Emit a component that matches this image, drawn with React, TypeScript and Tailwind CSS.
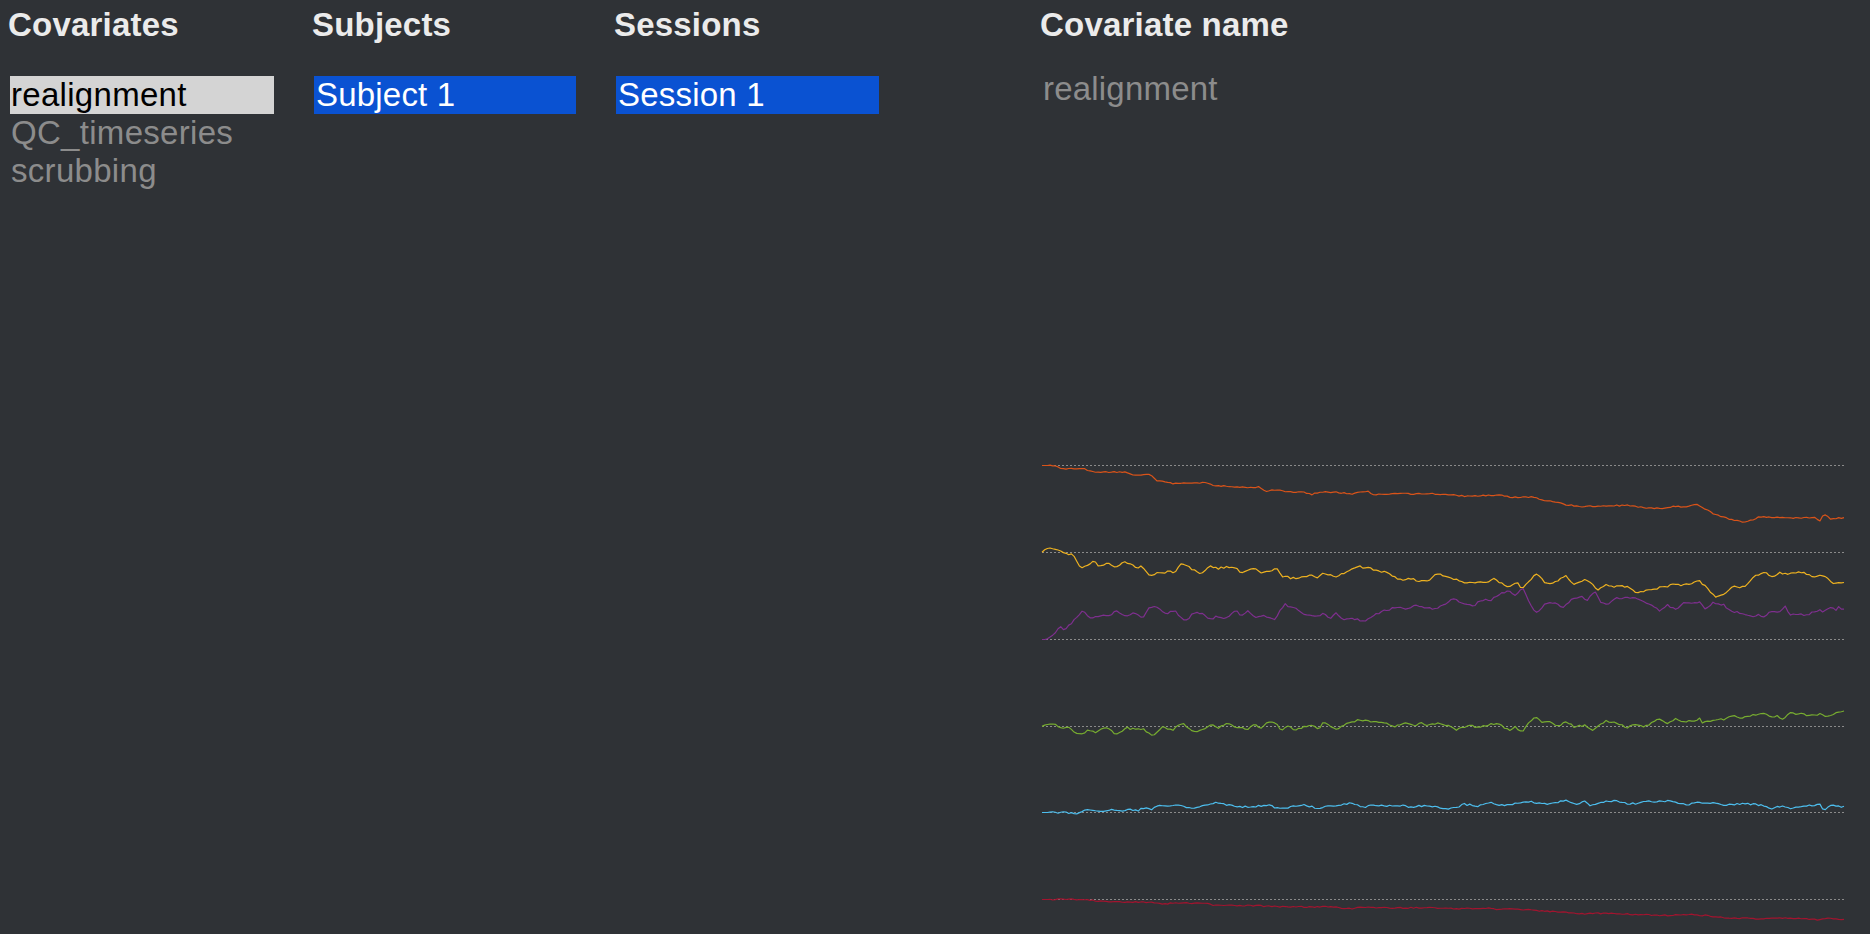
import React from "react";

type Pt = [number, number];

const SX = 840 / 1568;

const traces: { color: string; base: number; zbase: number; noise: number; pts: Pt[] }[] = [
  {
    color: "#d95319",
    base: 25.5,
    zbase: 75,
    noise: 0.6,
    pts: [[22,75],[45,75],[60,85],[100,85],[120,95],[180,95],[190,103],[225,103],[235,120],[270,130],[290,127],[330,127],[345,138],[360,135],[380,140],[430,140],[440,152],[460,148],[480,155],[510,155],[525,162],[540,155],[570,155],[600,160],[630,152],[640,162],[680,160],[720,160],[760,160],[800,165],[820,168],[850,165],[880,165],[900,170],[940,170],[960,180],[980,185],[1000,192],[1030,198],[1080,195],[1120,195],[1140,200],[1160,203],[1190,203],[1200,198],[1230,198],[1245,190],[1270,215],[1290,228],[1310,238],[1330,245],[1350,238],[1360,230],[1400,230],[1420,232],[1465,232],[1475,240],[1482,220],[1495,235],[1518,232]],
  },
  {
    color: "#edb120",
    base: 112.5,
    zbase: 337,
    noise: 1.0,
    pts: [[22,337],[30,325],[45,325],[60,335],[70,345],[78,338],[90,370],[95,385],[110,370],[120,365],[130,380],[145,367],[160,382],[175,365],[190,372],[200,385],[210,378],[225,410],[240,395],[250,400],[260,393],[270,403],[280,370],[295,378],[310,395],[320,400],[335,378],[350,385],[370,380],[385,385],[395,400],[405,393],[420,385],[430,398],[450,393],[460,380],[470,407],[490,415],[510,410],[525,405],[535,415],[545,400],[570,410],[590,395],[615,380],[635,385],[650,395],[660,393],[680,410],[695,420],[710,415],[725,422],[745,420],[760,400],[775,410],[800,420],[810,430],[830,425],[850,428],[865,415],[880,430],[895,440],[910,425],[918,445],[935,420],[945,400],[960,425],[975,432],[1000,405],[1015,432],[1035,420],[1045,425],[1060,452],[1075,430],[1085,440],[1100,435],[1115,440],[1135,460],[1150,448],[1165,448],[1180,438],[1190,440],[1200,430],[1215,438],[1235,428],[1250,422],[1265,445],[1280,470],[1295,465],[1310,440],[1335,440],[1350,410],[1370,395],[1385,410],[1400,398],[1420,402],[1440,395],[1465,412],[1480,405],[1500,428],[1518,425]],
  },
  {
    color: "#7e2f8e",
    base: 199.5,
    zbase: 598,
    noise: 1.0,
    pts: [[22,598],[30,598],[40,590],[55,560],[65,570],[80,545],[98,510],[110,535],[130,525],[145,530],[160,512],[175,528],[195,518],[210,535],[225,498],[240,505],[255,520],[270,512],[290,545],[305,518],[320,520],[335,538],[350,528],[360,538],[385,512],[395,530],[405,510],[420,530],[440,528],[455,540],[475,492],[495,505],[510,520],[535,530],[550,520],[560,540],[570,517],[585,538],[605,535],[625,545],[645,522],[665,510],[690,500],[700,510],[720,495],[740,505],[760,505],[775,490],[790,475],[805,490],[830,495],[840,480],[860,480],[880,460],[895,450],[905,465],[920,445],[935,495],[945,520],[960,495],[980,485],[995,505],[1010,478],[1030,470],[1040,482],[1055,452],[1065,485],[1075,495],[1095,475],[1115,472],[1130,475],[1150,488],[1160,492],[1175,510],[1190,495],[1205,508],[1220,488],[1250,488],[1260,505],[1275,488],[1295,495],[1310,515],[1330,518],[1345,530],[1360,522],[1370,530],[1385,512],[1400,515],[1410,500],[1420,525],[1435,520],[1445,528],[1460,518],[1475,510],[1480,518],[1495,500],[1505,510],[1510,500],[1518,508]],
  },
  {
    color: "#77ac30",
    base: 286.5,
    zbase: 228,
    noise: 1.0,
    pts: [[22,228],[30,222],[45,222],[60,232],[70,228],[80,240],[95,255],[110,238],[125,245],[140,230],[160,250],[180,232],[200,238],[210,235],[230,255],[245,230],[265,240],[285,218],[305,245],[325,235],[340,222],[350,235],[365,220],[390,230],[405,238],[420,222],[430,232],[440,220],[455,212],[470,240],[480,222],[495,240],[510,230],[525,222],[540,235],[548,210],[560,230],[575,235],[590,222],[600,215],[615,208],[630,212],[660,215],[680,230],[700,215],[715,225],[730,218],[740,225],[760,218],[780,225],[795,238],[810,230],[820,222],[835,232],[855,225],[870,218],[885,230],[895,242],[905,230],[918,245],[935,210],[945,200],[955,218],[970,212],[985,228],[1000,212],[1015,228],[1035,225],[1050,240],[1075,212],[1095,218],[1115,232],[1130,222],[1145,228],[1155,222],[1175,205],[1190,218],[1205,205],[1220,212],[1240,212],[1250,202],[1255,218],[1275,208],[1300,205],[1310,195],[1330,202],[1350,195],[1370,190],[1385,200],[1395,198],[1405,205],[1420,188],[1440,190],[1455,195],[1475,190],[1490,198],[1505,185],[1518,180]],
  },
  {
    color: "#4dbeee",
    base: 372.5,
    zbase: 487,
    noise: 0.9,
    pts: [[22,487],[60,487],[90,490],[105,480],[130,483],[150,478],[170,482],[190,478],[200,482],[215,472],[225,480],[240,465],[260,470],[280,465],[295,475],[325,468],[345,458],[370,465],[400,470],[430,468],[445,465],[465,475],[490,470],[510,462],[535,475],[555,470],[580,465],[600,458],[620,472],[640,465],[660,468],[695,465],[710,472],[740,465],[770,475],[790,475],[810,462],[835,468],[860,458],[880,465],[905,460],[930,455],[950,458],[970,462],[1000,450],[1020,462],[1035,452],[1045,465],[1070,455],[1090,452],[1120,462],[1150,455],[1190,452],[1225,465],[1240,458],[1280,458],[1300,465],[1330,460],[1370,465],[1385,475],[1400,468],[1420,475],[1450,468],[1475,462],[1482,480],[1495,465],[1518,470]],
  },
  {
    color: "#a2142f",
    base: 459.5,
    zbase: 747,
    noise: 0.6,
    pts: [[22,747],[100,747],[130,752],[170,755],[230,755],[240,760],[280,758],[330,758],[345,765],[380,765],[430,765],[440,768],[500,768],[520,770],[555,768],[600,775],[620,770],[660,772],[700,772],[760,772],[800,775],[850,773],[880,777],[900,775],[930,778],[960,782],[990,785],[1030,790],[1050,788],[1100,790],[1150,793],[1190,795],[1230,792],[1260,795],[1290,800],[1320,803],[1360,805],[1400,803],[1440,805],[1470,808],[1490,803],[1518,806]],
  },
];

function makeRand(seed: number) {
  let s = seed >>> 0;
  return () => {
    s = (s * 1664525 + 1013904223) >>> 0;
    return s / 4294967296;
  };
}

function buildPoints(t: (typeof traces)[number], seed: number): string {
  const pts = t.pts.map(([zx, zy]) => [zx * SX, t.base + (zy - t.zbase) / 3] as Pt);
  const x0 = 12;
  const x1 = 814;
  const n = 300;
  const rand = makeRand(seed);
  const out: string[] = [];
  let j = 0;
  for (let i = 0; i <= n; i++) {
    const x = x0 + ((x1 - x0) * i) / n;
    while (j < pts.length - 2 && pts[j + 1][0] < x) j++;
    const [ax, ay] = pts[j];
    const [bx, by] = pts[j + 1];
    const f = bx === ax ? 0 : Math.min(1, Math.max(0, (x - ax) / (bx - ax)));
    let y = ay + (by - ay) * f;
    if (i > 2) y += (rand() - 0.5) * 2 * t.noise;
    out.push(`${x.toFixed(2)},${y.toFixed(2)}`);
  }
  return out.join(" ");
}

function Plot() {
  return (
    <svg width={840} height={494} viewBox="0 0 840 494" className="block">
      {traces.map((t) => (
        <line
          key={`d${t.base}`}
          x1={12}
          x2={814}
          y1={t.base}
          y2={t.base}
          stroke="#8a8a8a"
          strokeWidth={1}
          strokeDasharray="2 2"
        />
      ))}
      {traces.map((t, i) => (
        <polyline
          key={`p${t.base}`}
          points={buildPoints(t, 17 + i * 31)}
          fill="none"
          stroke={t.color}
          strokeWidth={1.2}
          strokeLinejoin="round"
        />
      ))}
    </svg>
  );
}

function Header({ children }: { children: React.ReactNode }) {
  return <div className="h-[38px] text-[33px] leading-[38px] font-bold tracking-[0.2px] text-[#ebebeb] whitespace-nowrap">{children}</div>;
}

export default function App() {
  return (
    <div className="w-[1870px] h-[934px] bg-[#2f3236] flex overflow-hidden font-['Liberation_Sans',Arial,sans-serif]">
      <div className="w-[1030px] flex pl-[8px] pt-[6px]">
        <div className="w-[304px] flex flex-col">
          <Header>Covariates</Header>
          <div className="mt-[32px] ml-[2px] w-[264px] flex flex-col">
            <div className="h-[38px] text-[33px] leading-[37px] tracking-[0.3px] bg-[#d4d4d4] text-black pl-[1px] whitespace-nowrap">realignment</div>
            <div className="h-[38px] text-[33px] leading-[37px] tracking-[0.3px] text-[#8c8c8c] pl-[1px] whitespace-nowrap">QC_timeseries</div>
            <div className="h-[38px] text-[33px] leading-[37px] tracking-[0.3px] text-[#8c8c8c] pl-[1px] whitespace-nowrap">scrubbing</div>
          </div>
        </div>
        <div className="w-[302px] flex flex-col">
          <Header>Subjects</Header>
          <div className="mt-[32px] ml-[2px] w-[262px] flex flex-col">
            <div className="h-[38px] text-[33px] leading-[37px] tracking-[0.2px] bg-[#0a52d2] text-white pl-[2px] whitespace-nowrap">Subject 1</div>
          </div>
        </div>
        <div className="w-[300px] flex flex-col">
          <Header>Sessions</Header>
          <div className="mt-[32px] ml-[2px] w-[263px] flex flex-col">
            <div className="h-[38px] text-[33px] leading-[37px] tracking-[0.2px] bg-[#0a52d2] text-white pl-[2px] whitespace-nowrap">Session 1</div>
          </div>
        </div>
      </div>
      <div className="w-[840px] h-[934px] flex flex-col pt-[6px]">
        <div className="pl-[10px]">
          <Header>Covariate name</Header>
        </div>
        <div className="mt-[28px] pl-[13px] h-[34px] text-[33px] leading-[34px] tracking-[0.2px] text-[#8c8c8c] whitespace-nowrap">realignment</div>
        <div className="mt-auto">
          <Plot />
        </div>
      </div>
    </div>
  );
}
